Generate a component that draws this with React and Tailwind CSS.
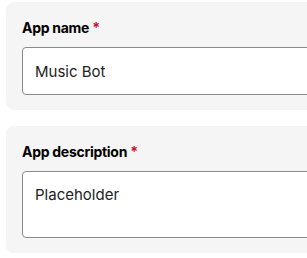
import React from 'react';

const Field = ({ label, children }) => (
  <div className="w-[360px] rounded-lg bg-[#f5f5f5] px-4 pt-4 pb-[15px]">
    <label className="mb-[9px] block text-[14px] font-bold leading-5 tracking-[-0.02em] text-black">
      {label} <span className="text-[#c8102e]">*</span>
    </label>
    {children}
  </div>
);

export default function App() {
  return (
    <div className="flex flex-col gap-4 overflow-hidden bg-white pl-[6px] pt-[2px] h-[258px] font-['Inter',sans-serif]">
      <Field label="App name">
        <input
          className="block h-12 w-full rounded border border-[#8a8a8a] bg-white px-3 text-[15px] text-[#222] outline-none"
          defaultValue="Music Bot"
        />
      </Field>
      <Field label="App description">
        <textarea
          className="block h-[67px] w-full resize-none rounded border border-[#8a8a8a] bg-white px-3 pt-[13px] text-[15px] leading-5 text-[#222] outline-none"
          defaultValue="Placeholder"
        />
      </Field>
    </div>
  );
}
